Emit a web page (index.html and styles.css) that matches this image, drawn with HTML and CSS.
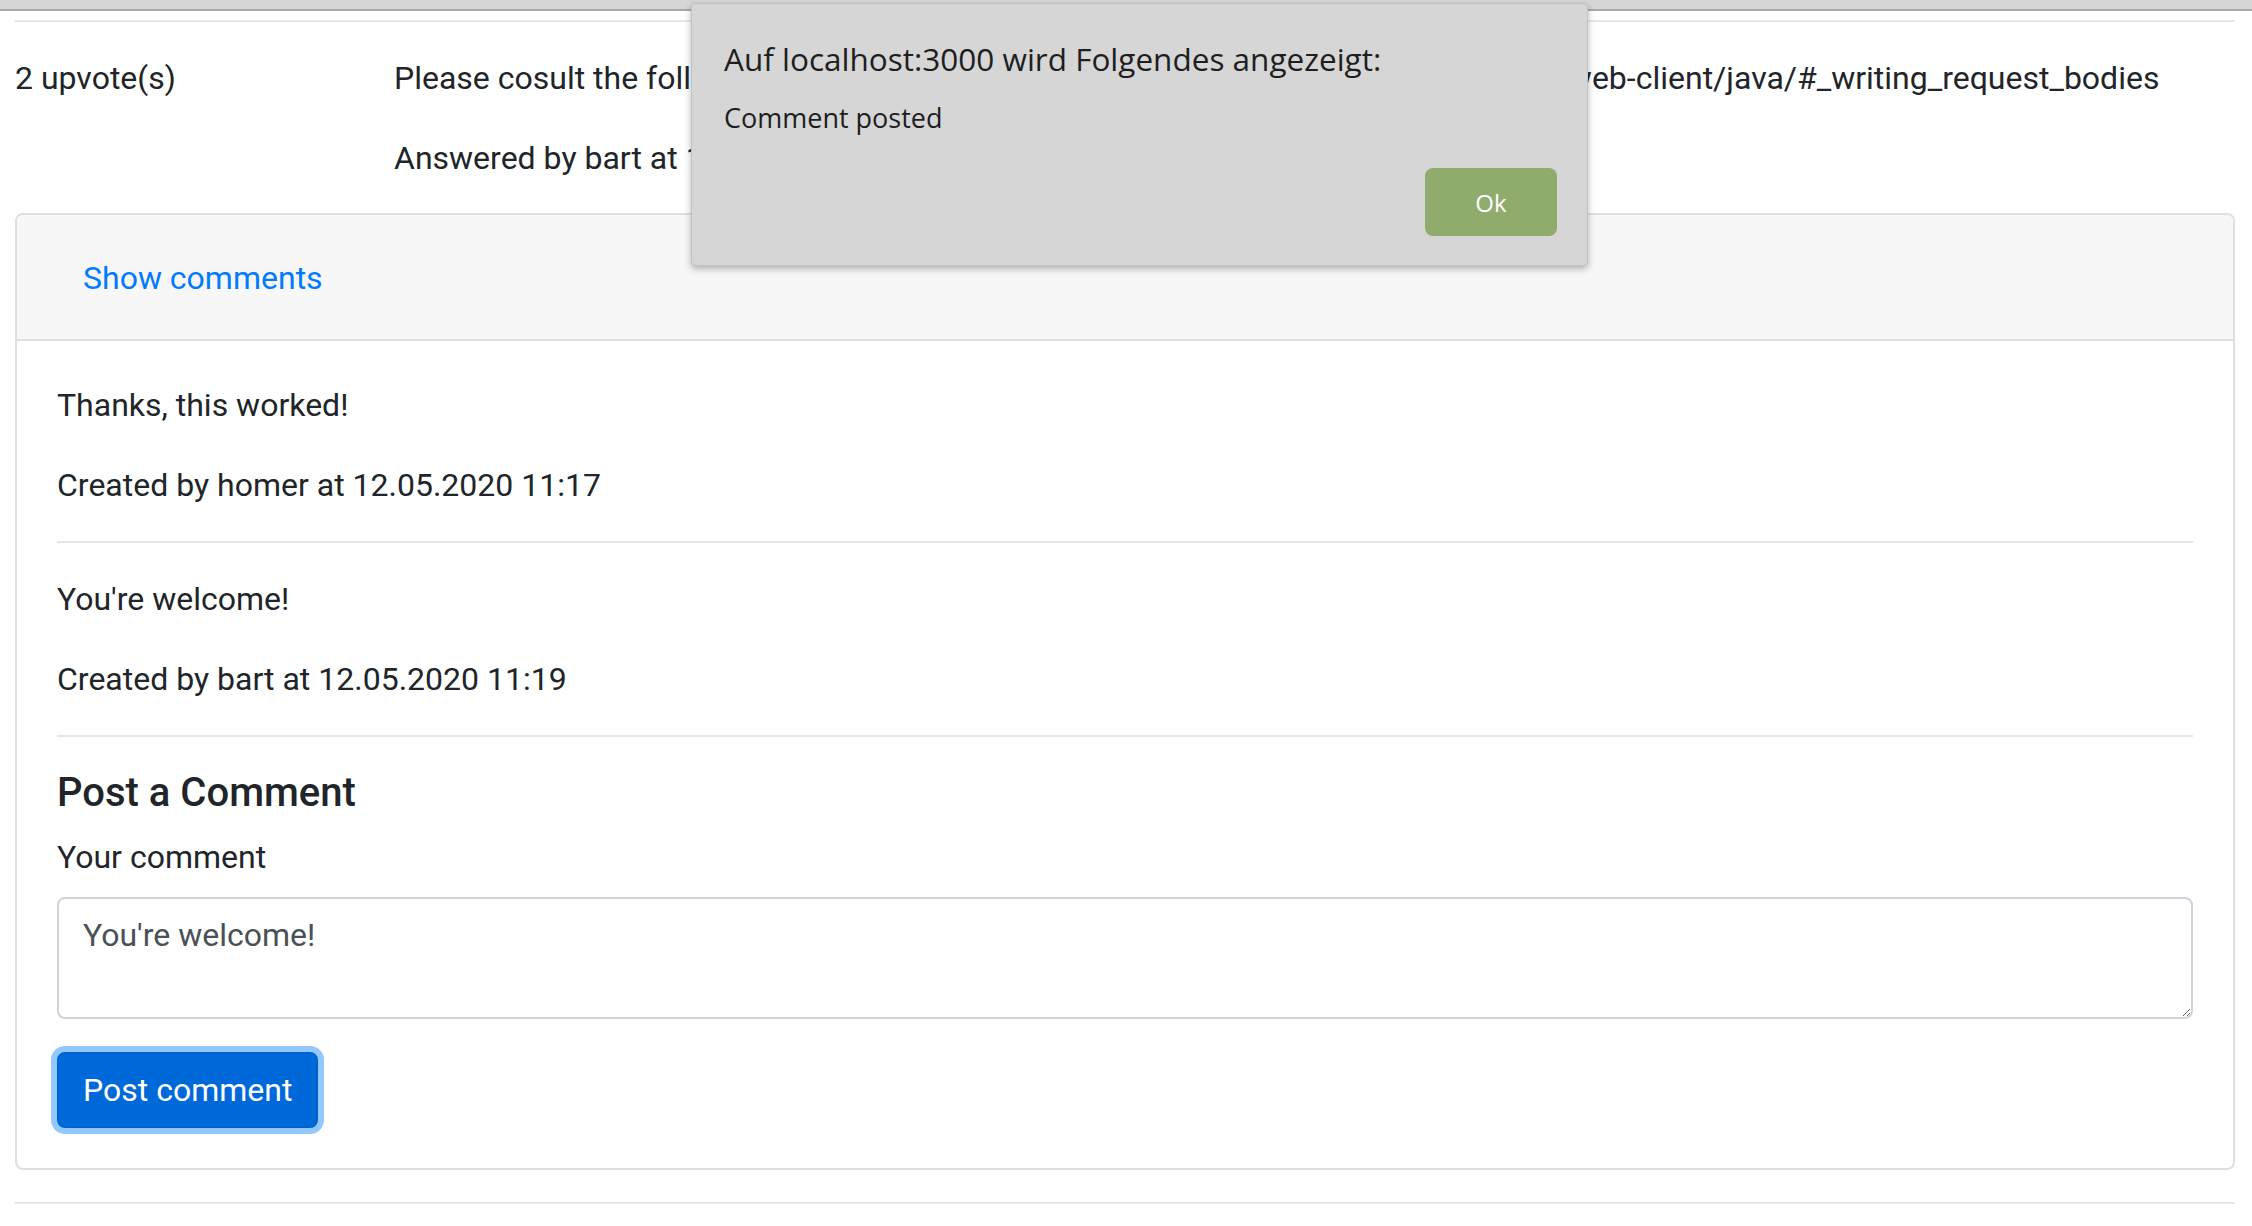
FILE: index.html
```html
<!DOCTYPE html>
<html lang="en">
<head>
<meta charset="utf-8">
<title>Answer</title>
<link rel="stylesheet" href="styles.css">
</head>
<body>
<div class="topbar"></div>
<div class="page">
  <hr class="rule first">
  <div class="answer">
    <div class="votes"><p>2 upvote(s)</p></div>
    <div class="answer-body">
      <p>Please cosult the following page of the documentation: https://vertx.io/docs/vertx-web-client/java/#_writing_request_bodies</p>
      <p>Answered by bart at 12.05.2020 11:18</p>
    </div>
  </div>
  <div class="card">
    <div class="card-header">
      <button class="btn-link" type="button">Show comments</button>
    </div>
    <div class="card-body">
      <div class="comment">
        <p>Thanks, this worked!</p>
        <p>Created by homer at 12.05.2020 11:17</p>
      </div>
      <hr class="rule">
      <div class="comment">
        <p>You're welcome!</p>
        <p>Created by bart at 12.05.2020 11:19</p>
      </div>
      <hr class="rule">
      <h5 class="form-title">Post a Comment</h5>
      <form class="comment-form">
        <label class="form-label" for="comment">Your comment</label>
        <textarea id="comment" class="form-control">You're welcome!</textarea>
        <button class="btn-primary" type="button">Post comment</button>
      </form>
    </div>
  </div>
  <hr class="rule after-card">
</div>

<div class="dialog">
  <div class="dialog-title">Auf localhost:3000 wird Folgendes angezeigt:</div>
  <div class="dialog-msg">Comment posted</div>
  <div class="dialog-actions"><button class="dialog-ok" type="button">Ok</button></div>
</div>
</body>
</html>
```
FILE: styles.css
```css
html, body {
  margin: 0;
  padding: 0;
  background: #ffffff;
}

body {
  font-family: Roboto, "Liberation Sans", sans-serif;
  font-size: 32px;
  line-height: 48px;
  color: #212529;
  position: relative;
  min-height: 1226px;
  overflow: hidden;
}

p {
  margin: 0 0 32px 0;
}

.topbar {
  height: 9px;
  background: #d6d6d6;
  border-bottom: 2px solid #a9a9a9;
}

.page {
  width: 2220px;
  margin-left: 15px;
}

.rule {
  border: 0;
  border-top: 2px solid #e6e6e6;
  margin: 32px 0;
  height: 0;
}

.rule.first {
  margin-top: 9px;
}

.answer {
  display: flex;
}

.votes {
  width: 379px;
  flex: none;
}

.answer-body {
  flex: 1;
  white-space: nowrap;
}

.card {
  border: 2px solid #dfdfdf;
  border-radius: 8px;
  margin-top: -1px;
  overflow: hidden;
}

.card-header {
  background: #f7f7f7;
  padding: 24px 40px;
  border-bottom: 2px solid #dfdfdf;
}

.btn-link {
  font-family: inherit;
  font-size: 32px;
  line-height: 48px;
  color: #007bff;
  background: transparent;
  border: 2px solid transparent;
  padding: 13px 24px 11px 24px;
  margin: 0;
  cursor: pointer;
}

.card-body {
  padding: 40px;
}

.form-title {
  font-size: 40px;
  line-height: 48px;
  font-weight: 500;
  margin: 0 0 16px 0;
}

.comment-form {
  display: flex;
  flex-direction: column;
  align-items: flex-start;
}

.form-label {
  display: block;
  margin-bottom: 16px;
}

.form-control {
  display: block;
  box-sizing: border-box;
  width: 100%;
  height: 122px;
  padding: 12px 24px;
  font-family: inherit;
  font-size: 32px;
  line-height: 48px;
  color: #495057;
  background: #ffffff;
  border: 2px solid #ced4da;
  border-radius: 8px;
  margin: 0 0 33px 0;
  resize: vertical;
}

.btn-primary {
  font-family: inherit;
  font-size: 32px;
  line-height: 48px;
  color: #ffffff;
  background: #0069d9;
  border: 2px solid #0062cc;
  border-radius: 8px;
  padding: 12px 24px;
  box-shadow: 0 0 0 6px rgba(38, 143, 255, 0.5);
  cursor: pointer;
}

.after-card {
  margin-top: 32px;
}

/* browser alert dialog */
.dialog {
  position: absolute;
  left: 691px;
  top: 3px;
  width: 897px;
  height: 263px;
  box-sizing: border-box;
  background: #d6d6d6;
  border: 1px solid #c2c2c2;
  border-radius: 4px;
  box-shadow: 0 3px 7px rgba(0, 0, 0, 0.28);
  padding: 36px 30px 29px 32px;
  display: flex;
  flex-direction: column;
  font-family: "Open Sans", Lato, sans-serif;
  color: #1e1e1e;
}

.dialog-title {
  font-size: 31.5px;
  line-height: 38px;
}

.dialog-msg {
  font-size: 27px;
  line-height: 34px;
  margin-top: 23px;
}

.dialog-actions {
  margin-top: auto;
  display: flex;
  justify-content: flex-end;
}

.dialog-ok {
  width: 132px;
  height: 68px;
  background: #8fac6d;
  color: #ffffff;
  border: 0;
  border-radius: 8px;
  font-family: "Open Sans", Lato, sans-serif;
  font-size: 24px;
  padding: 0;
}
```
